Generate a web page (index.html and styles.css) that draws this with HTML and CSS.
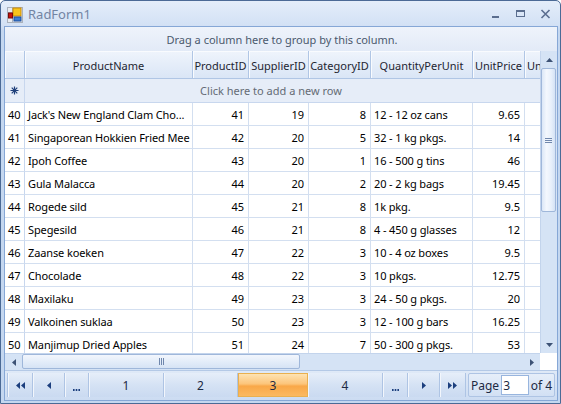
FILE: index.html
```html
<!DOCTYPE html>
<html>
<head>
<meta charset="utf-8">
<link rel="stylesheet" href="styles.css">
</head>
<body>
<div class="window">
  <div class="titlebar">
    <svg class="appicon" width="16" height="16" viewBox="0 0 16 16">
      <rect x="0.5" y="0.5" width="15" height="15" fill="#e8ebf0" stroke="#a9b1bd"/>
      <line x1="0.5" y1="5.5" x2="5.5" y2="5.5" stroke="#a9b1bd"/>
      <line x1="5.5" y1="0.5" x2="5.5" y2="15.5" stroke="#a9b1bd"/>
      <rect x="6" y="1" width="8" height="8" fill="#f7c51c" stroke="#c98a06"/>
      <rect x="1.5" y="6" width="4" height="5" fill="#c8140c" stroke="#7a0a06"/>
      <rect x="7" y="10" width="7" height="4" fill="#3b7fd6" stroke="#1f4f9a"/>
    </svg>
    <span class="title">RadForm1</span>
    <div class="controls">
      <svg width="12" height="12" viewBox="0 0 12 12"><rect x="2" y="8" width="7" height="2" fill="#5b6e8f"/></svg>
      <svg width="12" height="12" viewBox="0 0 12 12"><rect x="1.5" y="2.5" width="8" height="6" fill="none" stroke="#5b6e8f"/><rect x="1" y="2" width="9" height="2" fill="#5b6e8f"/></svg>
      <svg width="12" height="12" viewBox="0 0 12 12"><path d="M1.5 2 L9.5 10 M9.5 2 L1.5 10" stroke="#5b6e8f" stroke-width="1.6"/></svg>
    </div>
  </div>
  <div class="client">
    <div class="grouppanel">Drag a column here to group by this column.</div>
    <div class="gridarea">
      <div class="view">
        <div class="row header">
          <div class="c rh"></div>
          <div class="c">ProductName</div>
          <div class="c">ProductID</div>
          <div class="c">SupplierID</div>
          <div class="c">CategoryID</div>
          <div class="c">QuantityPerUnit</div>
          <div class="c">UnitPrice</div>
          <div class="c clip">Un</div>
        </div>
        <div class="row newrow">
          <div class="c rh"><svg width="9" height="9" viewBox="0 0 9 9"><path d="M4.5 0.5 V8.5 M0.5 4.5 H8.5 M1.7 1.7 L7.3 7.3 M7.3 1.7 L1.7 7.3" stroke="#1f3f7a" stroke-width="1.2"/></svg></div>
          <div class="c addnew">Click here to add a new row</div>
        </div>
        <div class="row data"><div class="c rh">40</div><div class="c t">Jack's New England Clam Cho...</div><div class="c n">41</div><div class="c n">19</div><div class="c n">8</div><div class="c t">12 - 12 oz cans</div><div class="c n">9.65</div><div class="c"></div></div>
        <div class="row data"><div class="c rh">41</div><div class="c t">Singaporean Hokkien Fried Mee</div><div class="c n">42</div><div class="c n">20</div><div class="c n">5</div><div class="c t">32 - 1 kg pkgs.</div><div class="c n">14</div><div class="c"></div></div>
        <div class="row data"><div class="c rh">42</div><div class="c t">Ipoh Coffee</div><div class="c n">43</div><div class="c n">20</div><div class="c n">1</div><div class="c t">16 - 500 g tins</div><div class="c n">46</div><div class="c"></div></div>
        <div class="row data"><div class="c rh">43</div><div class="c t">Gula Malacca</div><div class="c n">44</div><div class="c n">20</div><div class="c n">2</div><div class="c t">20 - 2 kg bags</div><div class="c n">19.45</div><div class="c"></div></div>
        <div class="row data"><div class="c rh">44</div><div class="c t">Rogede sild</div><div class="c n">45</div><div class="c n">21</div><div class="c n">8</div><div class="c t">1k pkg.</div><div class="c n">9.5</div><div class="c"></div></div>
        <div class="row data"><div class="c rh">45</div><div class="c t">Spegesild</div><div class="c n">46</div><div class="c n">21</div><div class="c n">8</div><div class="c t">4 - 450 g glasses</div><div class="c n">12</div><div class="c"></div></div>
        <div class="row data"><div class="c rh">46</div><div class="c t">Zaanse koeken</div><div class="c n">47</div><div class="c n">22</div><div class="c n">3</div><div class="c t">10 - 4 oz boxes</div><div class="c n">9.5</div><div class="c"></div></div>
        <div class="row data"><div class="c rh">47</div><div class="c t">Chocolade</div><div class="c n">48</div><div class="c n">22</div><div class="c n">3</div><div class="c t">10 pkgs.</div><div class="c n">12.75</div><div class="c"></div></div>
        <div class="row data"><div class="c rh">48</div><div class="c t">Maxilaku</div><div class="c n">49</div><div class="c n">23</div><div class="c n">3</div><div class="c t">24 - 50 g pkgs.</div><div class="c n">20</div><div class="c"></div></div>
        <div class="row data"><div class="c rh">49</div><div class="c t">Valkoinen suklaa</div><div class="c n">50</div><div class="c n">23</div><div class="c n">3</div><div class="c t">12 - 100 g bars</div><div class="c n">16.25</div><div class="c"></div></div>
        <div class="row data"><div class="c rh">50</div><div class="c t">Manjimup Dried Apples</div><div class="c n">51</div><div class="c n">24</div><div class="c n">7</div><div class="c t">50 - 300 g pkgs.</div><div class="c n">53</div><div class="c"></div></div>
      </div>
      <div class="vscroll">
        <div class="sbtn"><svg width="7" height="4" viewBox="0 0 7 4"><path d="M0 4 L3.5 0 L7 4 Z" fill="#3d5275"/></svg></div>
        <div class="vthumb"><span class="grip"></span></div>
        <div class="vtrack"></div>
        <div class="sbtn"><svg width="7" height="4" viewBox="0 0 7 4"><path d="M0 0 L3.5 4 L7 0 Z" fill="#3d5275"/></svg></div>
      </div>
      <div class="hscroll">
        <div class="hbtn"><svg width="4" height="7" viewBox="0 0 4 7"><path d="M4 0 L0 3.5 L4 7 Z" fill="#3d5275"/></svg></div>
        <div class="hthumb"><span class="hgrip"></span></div>
        <div class="htrack"></div>
        <div class="hbtn"><svg width="4" height="7" viewBox="0 0 4 7"><path d="M0 0 L4 3.5 L0 7 Z" fill="#3d5275"/></svg></div>
      </div>
      <div class="corner"></div>
    </div>
    <div class="pager">
      <div class="pbtn w26"><svg width="9" height="7" viewBox="0 0 9 7"><path d="M4 0 L0 3.5 L4 7 Z M9 0 L5 3.5 L9 7 Z" fill="#1c3f7e"/></svg></div>
      <div class="pbtn w32"><svg width="4" height="7" viewBox="0 0 4 7"><path d="M4 0 L0 3.5 L4 7 Z" fill="#1c3f7e"/></svg></div>
      <div class="pbtn w24 dots"><svg width="7" height="2" viewBox="0 0 7 2"><rect x="0" y="0" width="1.6" height="2" fill="#1c3f7e"/><rect x="2.7" y="0" width="1.6" height="2" fill="#1c3f7e"/><rect x="5.4" y="0" width="1.6" height="2" fill="#1c3f7e"/></svg></div>
      <div class="pbtn w75">1</div>
      <div class="pbtn w74">2</div>
      <div class="pbtn w70 sel">3</div>
      <div class="pbtn w75">4</div>
      <div class="pbtn w25 dots"><svg width="7" height="2" viewBox="0 0 7 2"><rect x="0" y="0" width="1.6" height="2" fill="#1c3f7e"/><rect x="2.7" y="0" width="1.6" height="2" fill="#1c3f7e"/><rect x="5.4" y="0" width="1.6" height="2" fill="#1c3f7e"/></svg></div>
      <div class="pbtn w32"><svg width="4" height="7" viewBox="0 0 4 7"><path d="M0 0 L4 3.5 L0 7 Z" fill="#1c3f7e"/></svg></div>
      <div class="pbtn w26"><svg width="9" height="7" viewBox="0 0 9 7"><path d="M0 0 L4 3.5 L0 7 Z M5 0 L9 3.5 L5 7 Z" fill="#1c3f7e"/></svg></div>
      <div class="pagebox">
        <span>Page</span>
        <span class="pageinput">3</span>
        <span>of 4</span>
      </div>
    </div>
  </div>
</div>
</body>
</html>
```
FILE: styles.css
```css
* { box-sizing: border-box; }
html, body { margin: 0; padding: 0; }
body {
  width: 561px;
  height: 404px;
  overflow: hidden;
  font-family: "Noto Sans", "Open Sans", sans-serif;
  font-size: 11px;
  color: #000;
}
.window {
  width: 561px;
  height: 404px;
  border: 1px solid #4b6a96;
  border-radius: 5px 5px 0 0;
  background: linear-gradient(#e4edfa 0px, #d3e1f5 24px, #c4d7f0 30px, #c4d7f0 100%);
  display: flex;
  flex-direction: column;
}
.titlebar {
  height: 25px;
  flex: none;
  display: flex;
  align-items: center;
  padding: 0 5px 0 6px;
}
.appicon { flex: none; margin-top: 2px; }
.title {
  margin-left: 5px;
  font-size: 13px;
  color: #7284a3;
  margin-top: 1px;
}
.controls {
  margin-left: auto;
  display: flex;
  gap: 13px;
  margin-right: 3px;
  margin-top: 1px;
}
.client {
  flex: 1;
  margin: 0 2px 2px 3px;
  border: 1px solid #86a7d6;
  background: #fff;
  display: flex;
  flex-direction: column;
}
.grouppanel {
  height: 24px;
  flex: none;
  background: linear-gradient(#eef3fb, #e2eaf7);
  color: #4b596d;
  display: flex;
  align-items: center;
  justify-content: center;
  padding-top: 1px;
  padding-left: 2px;
}
.gridarea {
  height: 319px;
  flex: none;
  display: grid;
  grid-template-columns: 535px 17px;
  grid-template-rows: 302px 17px;
}
.view {
  overflow: hidden;
  background: #fff;
}
.row {
  display: grid;
  grid-template-columns: 20px 168px 56px 60px 62px 102px 52px 15px;
}
.c {
  overflow: hidden;
  white-space: nowrap;
  display: flex;
  align-items: center;
  padding: 0 3px;
}
.header { height: 28px; }
.header .c {
  background: linear-gradient(#eff4fc, #dae6f6);
  border-right: 1px solid #b0c6e5;
  border-bottom: 1px solid #b0c6e5;
  box-shadow: inset 1px 1px 0 #f9fbfe;
  justify-content: center;
  color: #1e2531;
  padding: 1px 0 0 0;
}
.header .c.clip { justify-content: flex-start; padding-left: 2px; border-right: none; }
.newrow { height: 24px; background: #e6edf8; border-bottom: 1px solid #c8d7ee; }
.newrow .rh { justify-content: center; border-right: 1px solid #c8d7ee; }
.newrow .addnew {
  grid-column: 2 / 9;
  justify-content: center;
  color: #646b75;
  padding-right: 26px;
}
.data { height: 23px; }
.data .c {
  border-right: 1px solid #d3dff0;
  border-bottom: 1px solid #d3dff0;
  padding-top: 1px;
}
.data .c.t { padding-left: 3px; padding-right: 0; letter-spacing: -0.12px; }
.data .c.n { justify-content: flex-end; padding-right: 4px; }
.data .rh { padding-left: 3px; border-right: 1px solid #c8d7ee; }
.data .c:last-child { border-right: none; }

.vscroll {
  grid-row: 1;
  grid-column: 2;
  background: #d5e3f5;
  display: flex;
  flex-direction: column;
  border-left: 1px solid #c3d4ec;
}
.sbtn {
  height: 17px;
  flex: none;
  display: flex;
  align-items: center;
  justify-content: center;
}
.vthumb {
  height: 144px;
  flex: none;
  margin: 0 1px 0 0;
  border: 1px solid #9fb7da;
  border-radius: 2px;
  background: linear-gradient(90deg, #dbe7f7, #f3f7fd 35%, #e8f0fb 70%, #d4e2f5);
  display: flex;
  align-items: center;
  justify-content: center;
}
.grip {
  width: 7px;
  height: 5px;
  background: repeating-linear-gradient(#6f87ad 0 1px, transparent 1px 2px);
}
.vtrack { flex: 1; }
.hscroll {
  grid-row: 2;
  grid-column: 1;
  background: #d5e3f5;
  display: flex;
  border-top: 1px solid #c3d4ec;
}
.hbtn {
  width: 17px;
  flex: none;
  display: flex;
  align-items: center;
  justify-content: center;
}
.hthumb {
  width: 278px;
  flex: none;
  border: 1px solid #9fb7da;
  border-radius: 2px;
  background: linear-gradient(#f2f6fd, #e4edf9 50%, #d6e3f5);
  display: flex;
  align-items: center;
  justify-content: center;
  margin-bottom: 1px;
}
.hgrip {
  width: 5px;
  height: 7px;
  background: repeating-linear-gradient(90deg, #6f87ad 0 1px, transparent 1px 2px);
}
.htrack { flex: 1; }
.corner { grid-row: 2; grid-column: 2; background: #fff; }

.pager {
  flex: 1;
  display: flex;
  align-items: stretch;
  padding: 2px 2px 3px 2px;
  background: linear-gradient(#dfe9f7, #ccdcf2);
  border-top: 1px solid #b4c9e6;
  color: #173d7a;
  white-space: nowrap;
}
.pbtn {
  flex: none;
  display: flex;
  align-items: center;
  justify-content: center;
  background: linear-gradient(#e6eef9, #d5e2f4 50%, #cadaf1);
  border-right: 1px solid #aec4e4;
  box-shadow: inset 1px 0 0 #f2f6fc;
  color: #1d2a44;
  font-size: 12px;
}
.pbtn:first-child { border-left: 1px solid #aec4e4; }
.dots { align-items: flex-end; padding-bottom: 6px; }
.w24 { width: 24px; }
.w25 { width: 25px; }
.w26 { width: 26px; }
.w32 { width: 32px; }
.w70 { width: 70px; }
.w74 { width: 74px; }
.w75 { width: 75px; }
.pbtn.sel {
  background: linear-gradient(#fee3b3, #fcc57a 45%, #f9a848 55%, #fbb960);
  border: 1px solid #e9b04f;
  box-shadow: none;
}
.pagebox {
  margin-left: 2px;
  width: 87px;
  flex: none;
  display: flex;
  align-items: center;
  gap: 2px;
  padding: 0 2px;
  border: 1px solid #aec4e4;
  border-radius: 2px;
  background: linear-gradient(#e6eef9, #d2e0f4);
  color: #1d2a44;
  font-size: 12px;
}
.pageinput {
  width: 31px;
  height: 20px;
  background: #fff;
  border: 1px solid #98b5de;
  padding-left: 1px;
  display: flex;
  align-items: center;
}
```
